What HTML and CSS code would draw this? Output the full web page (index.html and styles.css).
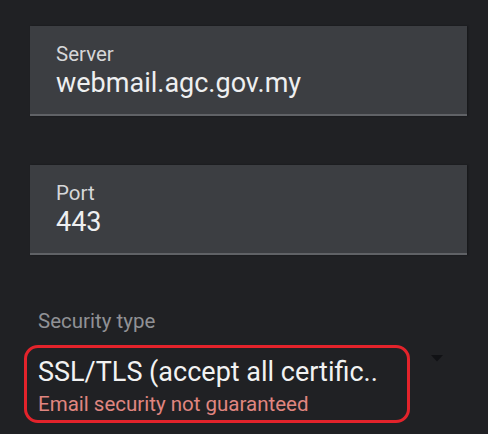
FILE: index.html
```html
<!DOCTYPE html>
<html>
<head>
<meta charset="utf-8">
<link rel="stylesheet" href="styles.css">
</head>
<body>
<div class="page">
  <div class="field">
    <div class="field-label">Server</div>
    <div class="field-value">webmail.agc.gov.my</div>
  </div>
  <div class="field field-port">
    <div class="field-label">Port</div>
    <div class="field-value">443</div>
  </div>
  <div class="security">
    <div class="security-label">Security type</div>
    <div class="select-row">
      <div class="select-box">
        <div class="select-value">SSL/TLS (accept all certific..</div>
        <div class="select-error">Email security not guaranteed</div>
      </div>
      <svg class="arrow" width="12" height="7" viewBox="0 0 12 7"><path d="M0 0 L12 0 L6 6.5 Z" fill="#111215"/></svg>
    </div>
  </div>
</div>
</body>
</html>
```
FILE: styles.css
```css
html, body {
  margin: 0;
  padding: 0;
  background: #202124;
}
body {
  font-family: Roboto, "Noto Sans", sans-serif;
  width: 488px;
  height: 434px;
  overflow: hidden;
}
.page {
  padding: 26px 21px 0 30px;
}
.field {
  background: #3c3e42;
  border-bottom: 2px solid #606266;
  padding: 16px 26px 14px 26px;
  box-shadow: 1px 0 2px rgba(0,0,0,0.35);
}
.field-port {
  margin-top: 49px;
}
.field-label {
  font-size: 20.5px;
  line-height: 24px;
  color: #d6d7d9;
}
.field-value {
  font-size: 27px;
  line-height: 34px;
  color: #eeeff0;
}
.security {
  margin-top: 54px;
}
.security-label {
  font-size: 20.5px;
  line-height: 24px;
  color: #909195;
  padding-left: 8px;
  margin-bottom: 12px;
}
.select-row {
  display: flex;
  align-items: flex-start;
  margin-left: -6px;
}
.select-box {
  width: 369px;
  border: 3px solid #e3232b;
  border-radius: 14px;
  padding: 7px 0 2px 11px;
}
.select-value {
  font-size: 27px;
  line-height: 35px;
  color: #f2f2f2;
  white-space: nowrap;
}
.select-error {
  font-size: 20.5px;
  line-height: 28px;
  color: #e08680;
  white-space: nowrap;
}
.arrow {
  margin-left: 21px;
  margin-top: 10px;
}
```
